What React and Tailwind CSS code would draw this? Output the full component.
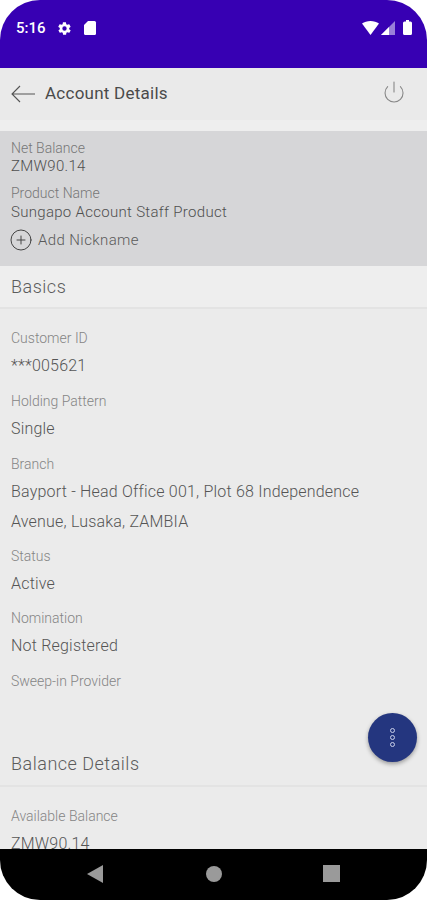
import React from 'react';
import { Power, CirclePlus } from 'lucide-react';

const Field = ({ label, children, className = '' }) => (
  <div className={className}>
    <div className="text-[14px] leading-[18px] font-light text-[#858585]">{label}</div>
    <div className="mt-[4px] text-[16px] leading-[30px] font-light text-[#555] tracking-[0.2px]">{children}</div>
  </div>
);

const SectionTitle = ({ children, className = '' }) => (
  <div className={`h-[43px] px-[11px] flex items-center border-b-2 border-[#e3e3e3] text-[18px] font-light text-[#5c5c5c] tracking-[0.5px] ${className}`}>
    {children}
  </div>
);

export default function App() {
  return (
    <div className="h-[900px] w-[427px] bg-white overflow-hidden" style={{ fontFamily: 'Roboto, sans-serif' }}>
      <div className="relative h-full flex flex-col rounded-[40px] overflow-hidden bg-[#ebebeb]">
        {/* status bar */}
        <div className="h-[68px] shrink-0 bg-[#3700b3] flex items-start justify-between pl-[16px] pr-[15px] pt-[18px] text-white">
          <div className="flex items-center gap-[11px]">
            <span className="text-[15px] leading-[20px] font-medium">5:16</span>
            <svg width="15" height="15" viewBox="0 0 24 24" fill="#fff">
              <path d="M19.4 13c.1-.3.1-.7.1-1s0-.7-.1-1l2.100-1.600c.2-.2.2-.4.1-.6l-2-3.500c-.1-.2-.4-.3-.6-.2l-2.500 1c-.5-.4-1.100-.7-1.700-1l-.4-2.600c0-.3-.2-.5-.5-.5h-4c-.3 0-.5.2-.5.500l-.4 2.600c-.6.300-1.200.600-1.700 1l-2.500-1c-.2-.100-.5 0-.6.200l-2 3.500c-.1.200-.1.400.1.600L4.600 11c-.1.300-.1.700-.1 1s0 .7.100 1l-2.100 1.600c-.2.200-.2.400-.1.600l2 3.500c.1.200.4.300.6.200l2.500-1c.5.400 1.100.700 1.700 1l.4 2.600c0 .3.2.5.5.5h4c.3 0 .5-.2.5-.5l.4-2.600c.6-.3 1.200-.6 1.700-1l2.500 1c.2.100.5 0 .6-.2l2-3.500c.1-.2.1-.4-.1-.6L19.400 13zM12 15.500a3.500 3.500 0 1 1 0-7 3.500 3.500 0 0 1 0 7z" />
            </svg>
            <svg width="14" height="16" viewBox="0 0 14 16" fill="#fff">
              <path d="M5 1h6.500A1.500 1.500 0 0 1 13 2.500v11a1.500 1.500 0 0 1-1.500 1.500h-9A1.500 1.500 0 0 1 1 13.500V5z" />
            </svg>
          </div>
          <div className="flex items-center gap-[2px] pt-[2px]">
            <svg width="17" height="14" viewBox="0 0 17 14" fill="#fff">
              <path d="M0 2.500C2.300.900 5.200 0 8.500 0s6.200.900 8.500 2.500L8.500 14z" />
            </svg>
            <svg width="14" height="14" viewBox="0 0 14 14">
              <path d="M14 0v14H0z" fill="#9a80d9" />
              <path d="M8 6v8H0z" fill="#fff" />
            </svg>
            <svg width="9" height="15" viewBox="0 0 9 15" fill="#fff" className="ml-[6px]">
              <path d="M3 0h3v1.500h1.500A1.500 1.500 0 0 1 9 3v10.500A1.500 1.500 0 0 1 7.500 15h-6A1.500 1.500 0 0 1 0 13.500V3a1.500 1.500 0 0 1 1.500-1.500H3z" />
            </svg>
          </div>
        </div>

        {/* toolbar */}
        <div className="h-[52px] shrink-0 bg-[#eaeaea] flex items-center pl-[11px] pr-[21px] shadow-[0_1px_1px_rgba(0,0,0,0.06)]">
          <svg width="24" height="18" viewBox="0 0 24 18" fill="none" stroke="#555" strokeWidth="1.1">
            <path d="M24 9H1M9 1L1 9l8 8" />
          </svg>
          <span className="ml-[10px] text-[17px] text-[#4a4a4a] tracking-[0.25px]">Account Details</span>
          <Power size={24} strokeWidth={1.1} className="ml-auto -mt-[4px] text-[#888]" />
        </div>
        <div className="h-[11px] shrink-0 bg-[#eeeeee]" />

        {/* account summary */}
        <div className="h-[135px] shrink-0 bg-[#d6d6d8] px-[11px] pt-[9px]">
          <div className="text-[14px] leading-[16px] font-light text-[#777]">Net Balance</div>
          <div className="mt-[1px] text-[15px] leading-[18px] font-light text-[#4f4f4f] tracking-[0.3px]">ZMW90.14</div>
          <div className="mt-[10px] text-[14px] leading-[16px] font-light text-[#777]">Product Name</div>
          <div className="mt-[2px] text-[15px] leading-[18px] font-light text-[#4f4f4f] tracking-[0.3px]">Sungapo Account Staff Product</div>
          <div className="mt-[7px] flex items-center">
            <CirclePlus size={24} strokeWidth={1} className="text-[#444] -ml-[2px]" />
            <span className="ml-[5px] text-[15px] font-light text-[#5a5a5a] tracking-[0.4px]">Add Nickname</span>
          </div>
        </div>

        {/* details */}
        <SectionTitle className="bg-[#eeeeee]">Basics</SectionTitle>
        <div className="px-[11px] pt-[20px]">
          <Field label="Customer ID">***005621</Field>
          <Field label="Holding Pattern" className="mt-[11px]">Single</Field>
          <Field label="Branch" className="mt-[11px]">
            Bayport - Head Office 001, Plot 68 Independence Avenue, Lusaka, ZAMBIA
          </Field>
          <Field label="Status" className="mt-[10px]">Active</Field>
          <Field label="Nomination" className="mt-[10px]">Not Registered</Field>
          <div className="mt-[11px] text-[14px] leading-[18px] font-light text-[#858585]">Sweep-in Provider</div>
        </div>
        <div className="mt-[54px]">
          <SectionTitle className="pb-[2px]">Balance Details</SectionTitle>
        </div>
        <div className="px-[11px] pt-[20px]">
          <Field label="Available Balance">ZMW90.14</Field>
        </div>

        {/* fab */}
        <button className="absolute left-[368px] top-[713px] w-[49px] h-[49px] rounded-full bg-[#24367f] shadow-[0_2px_4px_rgba(0,0,0,0.35)] flex flex-col items-center justify-center gap-[2px]">
          <span className="w-[5px] h-[5px] rounded-full border border-[#c8cfe8]" />
          <span className="w-[5px] h-[5px] rounded-full border border-[#c8cfe8]" />
          <span className="w-[5px] h-[5px] rounded-full border border-[#c8cfe8]" />
        </button>

        {/* nav bar */}
        <div className="absolute left-0 right-0 bottom-0 h-[51px] bg-black flex items-center justify-center pb-[2px]">
          <svg width="16" height="18" viewBox="0 0 16 18" fill="#9a9a9a" className="mr-[103px]">
            <path d="M16 0v18L0 9z" />
          </svg>
          <span className="w-[16px] h-[16px] rounded-full bg-[#9a9a9a]" />
          <span className="ml-[101px] w-[17px] h-[17px] bg-[#9a9a9a]" />
        </div>
      </div>
    </div>
  );
}
